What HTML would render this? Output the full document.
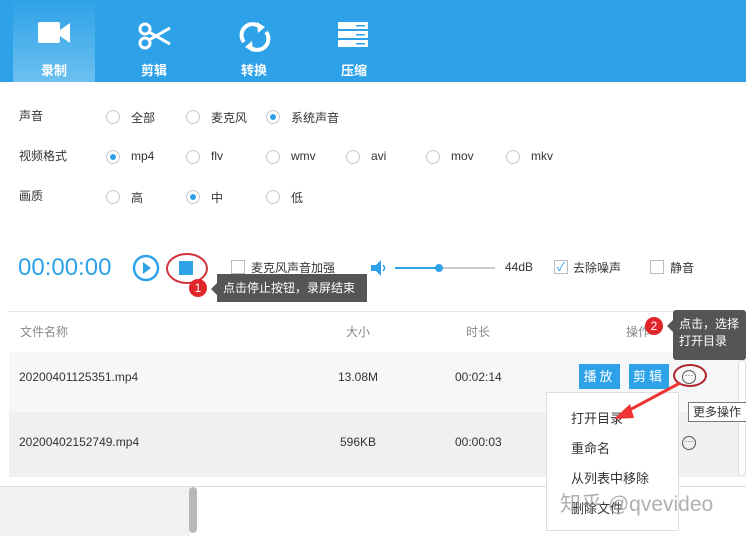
<!DOCTYPE html>
<html><head><meta charset="utf-8"><style>
*{margin:0;padding:0;box-sizing:border-box}
body{width:746px;height:536px;overflow:hidden;background:#fff;font-family:"Liberation Sans","Noto Sans CJK SC",sans-serif;font-size:12px;color:#333;position:relative}
.a{position:absolute}
.hdr{left:0;top:0;width:746px;height:82px;background:#2ea2e8}
.tab{top:0;width:82px;height:82px;color:#fff;font-size:13px;font-weight:bold;text-align:center}
.tab span{position:absolute;left:0;right:0;top:60px}
.tab svg{position:absolute;left:25px;top:22px}
.r{width:14px;height:14px;border:1px solid #c8c8c8;border-radius:50%;background:#fff}
.r.on::after{content:"";position:absolute;left:3px;top:3px;width:6px;height:6px;border-radius:50%;background:#2ea2e8}
.t{font-size:12px;color:#333}
.cb{width:14px;height:14px;border:1px solid #bbb;background:#fff}
.btn{background:#2ea2e8;color:#fff;font-size:13px;text-align:center;line-height:25px;height:25px;letter-spacing:3px}
.dot{width:14px;height:14px;border:1px solid #555;border-radius:50%;font-size:9px;line-height:9px;text-align:center;color:#555}
.badge{width:18px;height:18px;border-radius:50%;background:#e0262b;color:#fff;font-size:12px;text-align:center;line-height:18px}
.tip{background:#555;color:#fff;font-size:12px}
</style></head><body>
<div class="a hdr"></div>
<div class="a tab" style="left:13px;background:linear-gradient(#2ea2e8,#6cc0f0)"><svg width="34" height="22" viewBox="0 0 34 22"><rect x="0" y="0" width="22" height="21" rx="2" fill="#fff"/><path d="M22 8L32 1V21L22 14Z" fill="#fff"/></svg><span>录制</span></div>
<div class="a tab" style="left:113px"><svg width="34" height="28" viewBox="0 0 34 28"><circle cx="7" cy="7" r="5" fill="none" stroke="#fff" stroke-width="3"/><circle cx="7" cy="21" r="5" fill="none" stroke="#fff" stroke-width="3"/><path d="M11 10L32 22M11 18L32 6" stroke="#fff" stroke-width="3"/></svg><span>剪辑</span></div>
<div class="a tab" style="left:213px"><svg width="34" height="30" viewBox="0 0 34 30"><path d="M6 20A11 11 0 0 1 22 5" fill="none" stroke="#fff" stroke-width="4"/><path d="M19 0L27 5L20 11Z" fill="#fff"/><path d="M28 10A11 11 0 0 1 12 25" fill="none" stroke="#fff" stroke-width="4"/><path d="M15 30L7 25L14 19Z" fill="#fff"/></svg><span>转换</span></div>
<div class="a tab" style="left:313px"><svg width="34" height="26" viewBox="0 0 34 26"><rect x="0" y="0" width="30" height="7" fill="#fff"/><rect x="0" y="9" width="30" height="7" fill="#fff"/><rect x="0" y="18" width="30" height="7" fill="#fff"/><rect x="18" y="3" width="9" height="1.5" fill="#2ea2e8"/><rect x="18" y="12" width="9" height="1.5" fill="#2ea2e8"/><rect x="18" y="21" width="9" height="1.5" fill="#2ea2e8"/></svg><span>压缩</span></div>

<div class="a t" style="left:19px;top:107px">声音</div>
<div class="a t" style="left:19px;top:147px">视频格式</div>
<div class="a t" style="left:19px;top:187px">画质</div>
<div class="a r" style="left:106px;top:110px"></div><div class="a t" style="left:131px;top:109px">全部</div>
<div class="a r" style="left:186px;top:110px"></div><div class="a t" style="left:211px;top:109px">麦克风</div>
<div class="a r on" style="left:266px;top:110px"></div><div class="a t" style="left:291px;top:109px">系统声音</div>
<div class="a r on" style="left:106px;top:150px"></div><div class="a t" style="left:131px;top:149px">mp4</div>
<div class="a r" style="left:186px;top:150px"></div><div class="a t" style="left:211px;top:149px">flv</div>
<div class="a r" style="left:266px;top:150px"></div><div class="a t" style="left:291px;top:149px">wmv</div>
<div class="a r" style="left:346px;top:150px"></div><div class="a t" style="left:371px;top:149px">avi</div>
<div class="a r" style="left:426px;top:150px"></div><div class="a t" style="left:451px;top:149px">mov</div>
<div class="a r" style="left:506px;top:150px"></div><div class="a t" style="left:531px;top:149px">mkv</div>
<div class="a r" style="left:106px;top:190px"></div><div class="a t" style="left:131px;top:189px">高</div>
<div class="a r on" style="left:186px;top:190px"></div><div class="a t" style="left:211px;top:189px">中</div>
<div class="a r" style="left:266px;top:190px"></div><div class="a t" style="left:291px;top:189px">低</div>

<div class="a" style="left:18px;top:254px;font-size:24px;color:#2ea2e8">00:00:00</div>
<svg class="a" style="left:132px;top:254px" width="28" height="28"><circle cx="14" cy="14" r="12" fill="none" stroke="#2ea2e8" stroke-width="2.5"/><path d="M11 8L19 14L11 20Z" fill="#2ea2e8"/></svg>
<div class="a" style="left:179px;top:261px;width:14px;height:14px;background:#2ea2e8"></div>
<div class="a" style="left:166px;top:253px;width:42px;height:31px;border:2px solid #d0343a;border-radius:50%"></div>
<div class="a badge" style="left:189px;top:279px">1</div>
<div class="a tip" style="left:217px;top:274px;width:150px;height:28px;line-height:28px;padding-left:6px">点击停止按钮，录屏结束</div>
<div class="a" style="left:211px;top:283px;border:6px solid transparent;border-right-color:#555;border-left:0"></div>
<div class="a cb" style="left:231px;top:260px"></div><div class="a t" style="left:251px;top:259px">麦克风声音加强</div>
<svg class="a" style="left:370px;top:259px" width="18" height="18"><path d="M1 6H6L11 1V17L6 12H1Z" fill="#2ea2e8"/><path d="M13 6Q16 9 13 12" stroke="#2ea2e8" fill="none" stroke-width="1.5"/></svg>
<div class="a" style="left:395px;top:267px;width:100px;height:2px;background:#ccc"></div>
<div class="a" style="left:395px;top:267px;width:44px;height:2px;background:#2ea2e8"></div>
<div class="a" style="left:435px;top:264px;width:8px;height:8px;border-radius:50%;background:#2ea2e8"></div>
<div class="a t" style="left:505px;top:260px">44dB</div>
<div class="a cb" style="left:554px;top:260px;color:#2ea2e8;font-size:12px;line-height:12px;text-align:center">✓</div><div class="a t" style="left:573px;top:259px">去除噪声</div>
<div class="a cb" style="left:650px;top:260px"></div><div class="a t" style="left:670px;top:259px">静音</div>

<div class="a" style="left:9px;top:311px;width:737px;height:1px;background:#e6e6e6"></div>
<div class="a t" style="left:20px;top:323px;color:#888">文件名称</div>
<div class="a t" style="left:346px;top:323px;color:#888">大小</div>
<div class="a t" style="left:466px;top:323px;color:#888">时长</div>
<div class="a t" style="left:626px;top:323px;color:#888">操作</div>
<div class="a" style="left:9px;top:352px;width:737px;height:60px;background:#f6f7f8"></div>
<div class="a" style="left:9px;top:412px;width:737px;height:65px;background:#eff0f2"></div>
<div class="a t" style="left:19px;top:370px">20200401125351.mp4</div>
<div class="a t" style="left:338px;top:370px">13.08M</div>
<div class="a t" style="left:455px;top:370px">00:02:14</div>
<div class="a t" style="left:19px;top:435px">20200402152749.mp4</div>
<div class="a t" style="left:340px;top:435px">596KB</div>
<div class="a t" style="left:455px;top:435px">00:00:03</div>
<div class="a btn" style="left:579px;top:364px;width:41px">播放</div>
<div class="a btn" style="left:629px;top:364px;width:40px">剪辑</div>
<div class="a dot" style="left:682px;top:370px">···</div>
<div class="a dot" style="left:682px;top:436px">···</div>
<div class="a" style="left:673px;top:364px;width:34px;height:23px;border:2px solid #b0252b;border-radius:50%"></div>
<div class="a" style="left:0;top:486px;width:746px;height:1px;background:#ddd"></div>
<div class="a" style="left:0;top:487px;width:190px;height:49px;background:#f2f2f2"></div>
<div class="a" style="left:189px;top:487px;width:8px;height:46px;border-radius:4px;background:#b8b8b8"></div>
<div class="a" style="left:738px;top:360px;width:8px;height:116px;border:1px solid #ddd;border-radius:4px;background:#fff"></div>

<div class="a" style="left:546px;top:392px;width:133px;height:139px;background:#fff;border:1px solid #ddd"></div>
<div class="a" style="left:571px;top:408px;font-size:13px">打开目录</div>
<div class="a" style="left:571px;top:438px;font-size:13px">重命名</div>
<div class="a" style="left:571px;top:468px;font-size:13px">从列表中移除</div>
<div class="a" style="left:571px;top:498px;font-size:13px">删除文件</div>
<div class="a" style="left:560px;top:488px;font-size:21px;color:rgba(150,150,150,.75)">知乎 @qvevideo</div>
<svg class="a" style="left:600px;top:378px" width="90" height="50"><path d="M80 5L24 35" stroke="#e33" stroke-width="3"/><path d="M14 41L30 26L34 40Z" fill="#e33"/></svg>
<div class="a" style="left:688px;top:402px;width:60px;height:20px;border:1px solid #777;background:#fff;font-size:12px;line-height:18px;padding-left:4px">更多操作</div>
<div class="a badge" style="left:645px;top:317px">2</div>
<div class="a tip" style="left:673px;top:310px;width:73px;height:50px;padding:6px 0 0 6px;line-height:17px;border-radius:3px">点击，选择<br>打开目录</div>
<div class="a" style="left:667px;top:320px;border:6px solid transparent;border-right-color:#555;border-left:0"></div>
</body></html>
